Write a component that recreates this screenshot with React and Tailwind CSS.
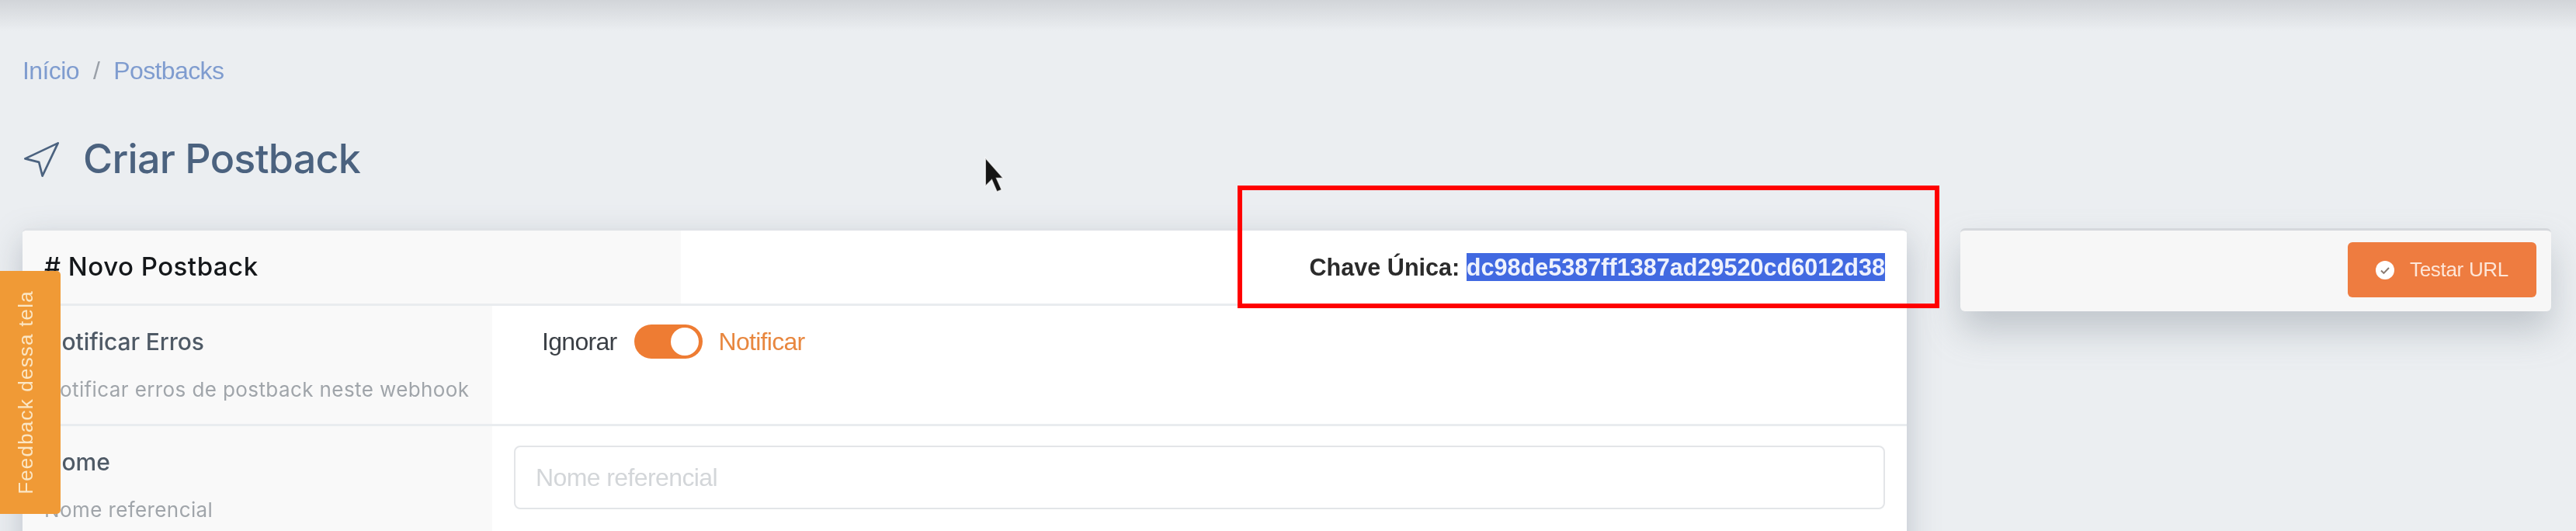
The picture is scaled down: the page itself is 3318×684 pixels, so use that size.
import React from "react";

const montserrat = "font-['Inter',sans-serif]";
const arial = "font-['Liberation_Sans',Arial,sans-serif]";

const Row = ({ title, hint, children, rowClass }) => (
  <div className={`flex border-t-[3px] border-[#e9ecef] ${rowClass}`}>
    <div className={`w-[605px] shrink-0 bg-[#f9f9f9] pl-[28px] ${montserrat}`}>
      <p className="pt-[26px] text-[30px] font-medium leading-[40px] tracking-[-0.1px] text-[#4f5a66]">{title}</p>
      <p className="mt-[26px] text-[26px] leading-[32px] tracking-[0.4px] text-[#a0a5aa]">{hint}</p>
    </div>
    <div className="flex-1 bg-white">{children}</div>
  </div>
);

const App = () => {
  return (
    <div className={`relative h-[684px] w-[3318px] overflow-hidden bg-[#ebeef1] blur-[0.6px] ${arial}`}>
      <div className="h-[40px] bg-gradient-to-b from-[#d2d5d9] to-[#ebeef1]" />

      <div className="px-[29px]">
        <nav className="mt-[33px] flex gap-[18px] text-[32px] leading-[36px] tracking-[-0.6px]">
          <a className="text-[#7f9ccf]">Início</a>
          <span className="text-[#9aa0a8]">/</span>
          <a className="text-[#7f9ccf]">Postbacks</a>
        </nav>

        <h1 className={`mt-[66px] flex h-[60px] items-center gap-[31px] pl-[2px] text-[52px] font-medium tracking-[-0.7px] text-[#4b627f] ${montserrat}`}>
          <svg viewBox="2.4 1.4 20.2 20.2" className="h-[45px] w-[45px]" fill="none" stroke="#4b627f" strokeWidth="1.2" strokeLinejoin="round">
            <polygon points="3 11 22 2 13 21 11 13 3 11" />
          </svg>
          Criar Postback
        </h1>

        <div className="mt-[59px] flex items-start gap-[69px]">
          <div className="w-[2427px] shrink-0 overflow-hidden rounded-t-[6px] border-t-[3px] border-[#dfe2e6] bg-white shadow-[0_15px_40px_rgba(130,140,155,0.45)]">
            <div className="flex h-[94px] items-center">
              <div className={`flex h-full w-[848px] items-center bg-[#f9f9f9] pl-[28px] text-[33px] font-medium tracking-[0.5px] text-[#14171a] ${montserrat}`}>
                # Novo Postback
              </div>
              <div className="flex flex-1 justify-end pr-[28px] text-[30.6px] font-bold leading-[36px] text-[#2b2b2b]">
                Chave Única:&nbsp;
                <span className="bg-[#4169e1] text-[#eef2fd]">dc98de5387ff1387ad29520cd6012d38</span>
              </div>
            </div>

            <Row title="Notificar Erros" hint="Notificar erros de postback neste webhook" rowClass="h-[155px]">
              <div className="flex items-center pl-[64px] pt-[24px] text-[32px] leading-[44px] tracking-[-0.7px]">
                <span className="text-[#3a3f45]">Ignorar</span>
                <span className="ml-[22px] flex h-[44px] w-[88px] items-center justify-end rounded-full bg-[#ee7c33] pr-[5px]">
                  <span className="h-[36px] w-[36px] rounded-full bg-white" />
                </span>
                <span className="ml-[21px] text-[#e8873f]">Notificar</span>
              </div>
            </Row>

            <Row title="Nome" hint="Nome referencial" rowClass="h-[200px]">
              <div className="pl-[28px] pr-[28px] pt-[25px]">
                <input
                  placeholder="Nome referencial"
                  className="h-[82px] w-full rounded-[8px] border-[2px] border-[#e3e5e8] bg-white px-[26px] text-[32px] tracking-[-0.6px] outline-none placeholder:text-[#d3d6d9]"
                />
              </div>
            </Row>
          </div>

          <div className="flex h-[107px] w-[761px] shrink-0 items-start justify-end rounded-[6px] border-t-[3px] border-[#d5d8dc] bg-[#f7f7f7] pr-[19px] pt-[15px] shadow-[0_25px_45px_rgba(130,140,150,0.4)]">
            <button className="flex h-[71px] w-[243px] items-center justify-center gap-[20px] rounded-[6px] bg-[#ee7c40] text-[26px] tracking-[-0.3px] text-[#fde6d8]">
              <svg viewBox="0 0 24 24" className="h-[24px] w-[24px]">
                <circle cx="12" cy="12" r="12" fill="#fff" />
                <path d="M7 12.5l3.4 3.4L17 9" fill="none" stroke="#8a7a70" strokeWidth="2" />
              </svg>
              Testar URL
            </button>
          </div>
        </div>
      </div>

      {/* tab de feedback, fica por cima do card */}
      <div className="absolute left-0 top-[349px] flex h-[313px] w-[78px] items-center justify-center rounded-r-[5px] bg-[#f09a36] pr-[12px]">
        <span className="-rotate-90 whitespace-nowrap text-[26px] tracking-[1.2px] text-[#fbe6c4]">Feedback dessa tela</span>
      </div>

      {/* marcacao vermelha do print */}
      <div className="pointer-events-none absolute left-[1594px] top-[239px] h-[158px] w-[904px] border-[6px] border-[#ff0000]" />

      {/* cursor */}
      <svg viewBox="0 0 26 46" className="absolute left-[1267px] top-[202px] h-[47px] w-[27px]">
        <path d="M2 1.500V37l8-8 6.500 15 6-2.500-6.500-14.500H24.500z" fill="#151515" stroke="#fff" strokeOpacity="0.7" strokeWidth="1.5" />
      </svg>
    </div>
  );
};

export default App;
